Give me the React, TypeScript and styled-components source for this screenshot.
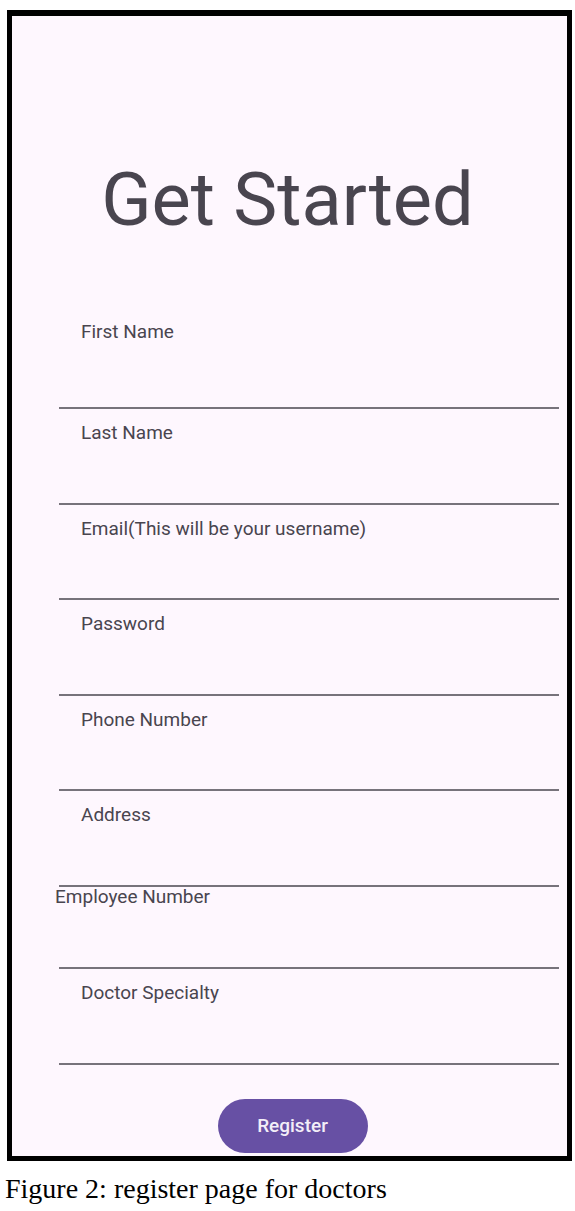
import styled, { createGlobalStyle } from 'styled-components'

const GlobalStyle = createGlobalStyle`
  html, body {
    margin: 0;
    padding: 0;
    background: #fff;
  }
  * {
    box-sizing: border-box;
  }
`

interface FieldProps {
    $tight?: boolean
    $first?: boolean
}

interface LabelProps {
    $outdent?: boolean
}

const fields = [
    { label: "First Name" },
    { label: "Last Name" },
    { label: "Email(This will be your username)" },
    { label: "Password" },
    { label: "Phone Number" },
    { label: "Address" },
    { label: "Employee Number", tight: true },
    { label: "Doctor Specialty" },
]

function App() {
    return (
        <>
            <GlobalStyle />
            <Page>
                <Frame>
                    <Title>Get Started</Title>
                    <Form>
                        {fields.map((f, i) => <Field key={i} $tight={f.tight} $first={i === 0}>
                            <Label $outdent={f.tight}>{f.label}</Label>
                        </Field>)}
                    </Form>
                    <RegisterButton>Register</RegisterButton>
                </Frame>
                <Caption>Figure 2: register page for doctors</Caption>
            </Page>
        </>
    )
}

const Page = styled.div`
  width: 575px;
  min-height: 1211px;
  padding: 10px 0 0 7px;
`

const Frame = styled.div`
  width: 565px;
  height: 1151px;
  border: 5px solid #000;
  border-top-width: 6px;
  background-color: #fef7fe;
  display: flex;
  flex-direction: column;
  align-items: center;
`

const Title = styled.h1`
  margin: 146px 4px 0 0;
  font-family: Roboto, "Noto Sans", sans-serif;
  font-weight: 400;
  font-size: 74px;
  line-height: 75px;
  color: #49454f;
  letter-spacing: 0;
`

const Form = styled.div`
  align-self: flex-start;
  margin-left: 47px;
  margin-top: 75px;
  width: 500px;
  display: flex;
  flex-direction: column;
`

const Field = styled.div<FieldProps>`
  display: flex;
  flex-direction: column;
  padding-top: ${({ $tight, $first }) => $tight ? "0" : $first ? "10px" : "14px"};
  height: ${({ $tight, $first }) => $tight ? "82px" : $first ? "97px" : "95.6px"};
  border-bottom: 2px solid #77737b;
`

const Label = styled.span<LabelProps>`
  font-family: Roboto, "Noto Sans", sans-serif;
  font-size: 19px;
  line-height: 20px;
  color: #49454f;
  margin-left: ${({ $outdent }) => $outdent ? "-4px" : "22px"};
`

const RegisterButton = styled.button`
  margin: 34px 0 0 6px;
  width: 150px;
  height: 54px;
  border: none;
  border-radius: 27px;
  background-color: #6750a4;
  color: #f3eef8;
  font-family: Roboto, "Noto Sans", sans-serif;
  font-weight: 500;
  font-size: 19px;
  cursor: pointer;
`

const Caption = styled.p`
  margin: 12px 0 0 -2px;
  font-family: "Liberation Serif", "Times New Roman", serif;
  font-size: 28px;
  color: #000;
`

export default App
